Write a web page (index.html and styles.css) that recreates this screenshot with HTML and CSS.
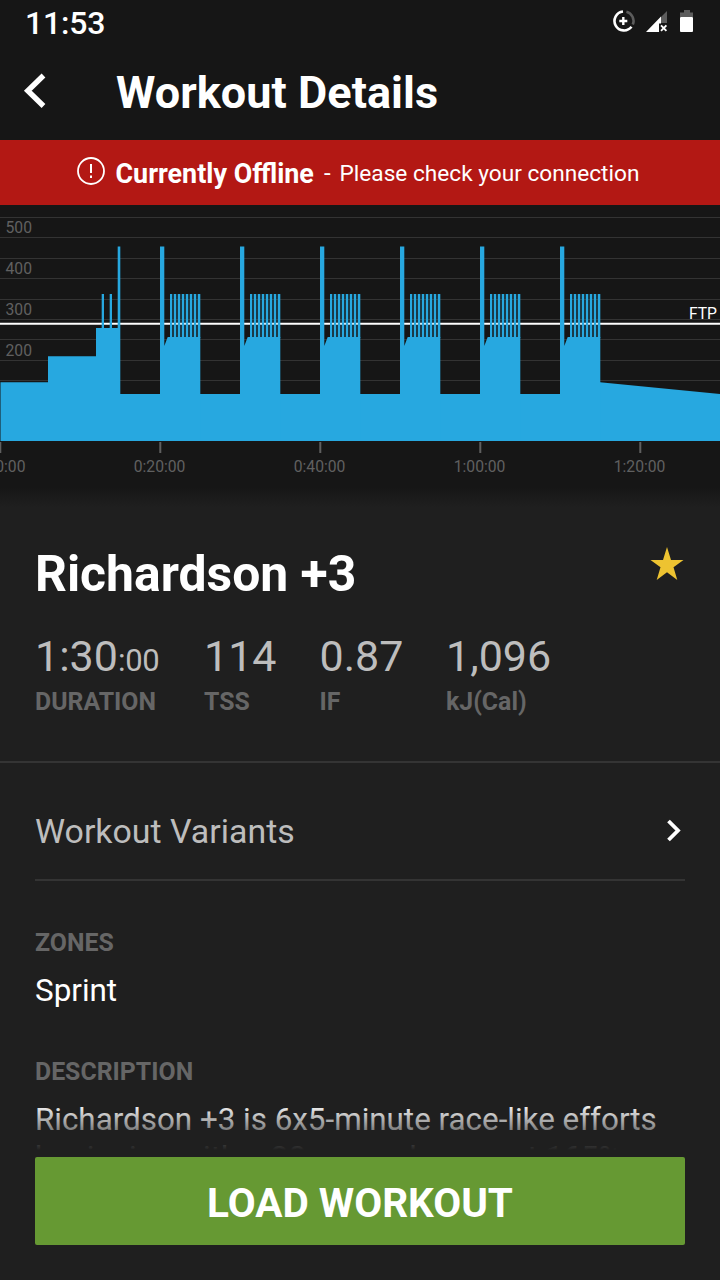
FILE: index.html
```
<!DOCTYPE html>
<html lang="en">
<head>
<meta charset="UTF-8">
<meta name="viewport" content="width=device-width, initial-scale=1.0">
<title>Workout Details</title>
<link rel="stylesheet" href="styles.css">
</head>
<body>

<div class="screen">
    <div class="status-bar">
        <span class="time">11:53</span>
        <svg class="status-icons" width="84" height="26" viewBox="0 0 84 26">
            <!-- data saver -->
            <path d="M12 3.5A9.5 9.5 0 1 0 20.5 18.8" fill="none" stroke="#fff" stroke-width="2.6"/>
            <path d="M15.4 3.8A9.5 9.5 0 0 1 21.8 16.6" fill="none" stroke="#5c5c5c" stroke-width="2.6"/>
            <path d="M12.3 9v8M8.3 13h8" stroke="#fff" stroke-width="2.4"/>
            <!-- signal -->
            <path d="M56 3v12h-7V10z" fill="#5c5c5c"/>
            <path d="M35 24L50 8.500V15.500h-2V24z" fill="#fff"/>
            <path d="M50 17.400l5.400 5.400M55.400 17.400L50 22.800" stroke="#fff" stroke-width="1.900"/>
            <!-- battery -->
            <path d="M69 9V4.500h4V2h6v2.500h3V9z" fill="#5c5c5c"/>
            <rect x="69" y="9" width="13" height="15" rx="1" fill="#fff"/>
        </svg>
    </div>

    <div class="header">
        <svg class="back" width="24" height="36" viewBox="0 0 24 36">
            <path d="M20.500 2.500L4.800 17.800L20.500 33" fill="none" stroke="#fff" stroke-width="5.400"/>
        </svg>
        <h1>Workout Details</h1>
    </div>

    <div class="banner">
        <svg class="alert" width="28" height="28" viewBox="0 0 28 28">
            <circle cx="14" cy="14" r="13" fill="none" stroke="#fff" stroke-width="1.800"/>
            <path d="M14 7v9M14 18.500v2.400" stroke="#fff" stroke-width="2"/>
        </svg>
        <b>Currently Offline</b>
        <span class="dash">-</span>
        <span class="message">Please check your connection</span>
    </div>

    <svg class="chart" width="720" height="282" viewBox="0 0 720 282">
        <defs>
            <!-- one effort: opening sprint, then eight short bursts -->
            <g id="effort">
                <rect x="10" y="89" width="30" height="44" opacity=".25"/>
                <path d="M0 237V41.500H4.300V141L7.700 132H40.300V237z"/>
                <path d="M10 89h2v44h-2zM14 89h2v44h-2zM18 89h2v44h-2zM22 89h2v44h-2zM26 89h2v44h-2zM30 89h2v44h-2zM34 89h2v44h-2zM38 89h2.300v44h-2.300z"/>
            </g>
        </defs>

        <path class="grid" d="M0 12.500H720M0 32.500H720M0 53.500H720M0 73.500H720M0 94.500H720M0 114.500H720M0 134.500H720M0 155.500H720M0 175.500H720"/>
        <path class="ftp-line" d="M0 118.700H720"/>
        <path class="ticks" d="M.3 237V248M160.300 237V248M320.300 237V248M480.300 237V248M640.300 237V248"/>

        <g class="power">
            <path d="M.5 236V177.300H48V151.300H96V123H101.700V89H104V123H109.700V89H112V123H117.700V41.500H120.300V189H600V177.300L720 189V236z"/>
            <use href="#effort" x="160"/>
            <use href="#effort" x="240"/>
            <use href="#effort" x="320"/>
            <use href="#effort" x="400"/>
            <use href="#effort" x="480"/>
            <use href="#effort" x="560"/>
        </g>
        <rect class="base" x="0" y="236" width="720" height="1"/>

        <g class="watts">
            <text x="5.500" y="28">500</text>
            <text x="5.500" y="69">400</text>
            <text x="5.500" y="110">300</text>
            <text x="5.500" y="151">200</text>
        </g>
        <text class="ftp" x="717" y="114">FTP</text>
        <g class="times">
            <text x="-.4" y="267">0:00:00</text>
            <text x="159.600" y="267">0:20:00</text>
            <text x="319.600" y="267">0:40:00</text>
            <text x="479.600" y="267">1:00:00</text>
            <text x="639.600" y="267">1:20:00</text>
        </g>
    </svg>

    <div class="details">
        <div class="summary">
            <div class="name-row">
                <h2>Richardson +3</h2>
                <svg class="star" width="34" height="34" viewBox="0 0 34 34">
                    <path d="M17 0l4 13H33.500L23.500 20.300L27.300 33L17 25.300L6.700 33L10.500 20.300L.5 13H13z" fill="#edc331"/>
                </svg>
            </div>
            <div class="stats">
                <div class="stat duration">
                    <div class="value">1:30<small>:00</small></div>
                    <div class="label">DURATION</div>
                </div>
                <div class="stat tss">
                    <div class="value">114</div>
                    <div class="label">TSS</div>
                </div>
                <div class="stat if">
                    <div class="value">0.87</div>
                    <div class="label">IF</div>
                </div>
                <div class="stat">
                    <div class="value">1,096</div>
                    <div class="label">kJ(Cal)</div>
                </div>
            </div>
        </div>

        <div class="variants">
            <span>Workout Variants</span>
            <svg width="16" height="24" viewBox="0 0 16 24">
                <path d="M2.500 2L12 11.500L2.500 21" fill="none" stroke="#fff" stroke-width="3.800"/>
            </svg>
        </div>

        <div class="label zones-label">ZONES</div>
        <div class="zone">Sprint</div>

        <div class="label description-label">DESCRIPTION</div>
        <p class="description">Richardson +3 is 6x5-minute race-like efforts beginning with a 30-second surge at 165%</p>
    </div>

    <div class="footer">
        <button type="button">LOAD WORKOUT</button>
    </div>
</div>

</body>
</html>
```
FILE: styles.css
```
body {
    font-family: Roboto, sans-serif;
    background-color: #1f1f1f;
    color: #fff;
    margin: 0;
}
svg {
    display: block;
    flex-shrink: 0;
}
h1, h2, p {
    margin: 0;
}
.screen {
    position: relative;
    width: 720px;
    height: 1280px;
    overflow: hidden;
}
.status-bar {
    display: flex;
    justify-content: space-between;
    align-items: center;
    height: 46px;
    padding: 0 25px;
    background-color: #161616;
}
.time {
    font-size: 32px;
    font-weight: 500;
    letter-spacing: -0.2px;
}
.status-icons {
    margin-bottom: 4px;
}
.header {
    display: flex;
    align-items: center;
    height: 94px;
    padding-left: 23px;
    background-color: #161616;
}
.back {
    margin-right: 69px;
    margin-bottom: 4px;
}
h1 {
    font-size: 45px;
    line-height: 94px;
    font-weight: 700;
    letter-spacing: 0.05px;
}
.banner {
    display: flex;
    align-items: center;
    height: 65px;
    padding-left: 76.500px;
    background-color: #b31814;
    white-space: nowrap;
}
.alert {
    margin-right: 11px;
    margin-bottom: 3px;
}
.banner b {
    font-size: 26.900px;
    line-height: 36px;
    margin-top: 2px;
}
.dash {
    font-size: 24px;
    margin: 0 9px 0 10px;
}
.message {
    font-size: 22.650px;
    margin-top: 1px;
}

/* power profile */
.chart {
    background-color: #161616;
    overflow: hidden;
}
.grid {
    stroke: #333;
    stroke-width: 1;
}
.ftp-line {
    stroke: #fff;
    stroke-width: 2;
}
.ticks {
    stroke: #5f5f5f;
    stroke-width: 2;
}
.power {
    fill: #27a8e0;
}
.base {
    fill: #161616;
}
.watts {
    fill: #606060;
    font-size: 15.700px;
}
.ftp {
    fill: #fff;
    font-size: 15.700px;
    text-anchor: end;
}
.times {
    fill: #606060;
    font-size: 15.700px;
    text-anchor: middle;
}

.details {
    height: 793px;
    background: linear-gradient(#161616, #1f1f1f 20px);
}
.summary {
    padding: 52px 35px 0;
    height: 222px;
    border-bottom: 2px solid #343434;
}
.name-row {
    display: flex;
    justify-content: space-between;
}
h2 {
    font-size: 49.850px;
    line-height: 70px;
    font-weight: 700;
}
.star {
    margin: 8px 1.500px 0 0;
}
.stats {
    display: flex;
    margin-top: 18px;
}
.value {
    height: 60px;
    font-size: 43px;
    line-height: 59px;
    color: #bdbdbd;
}
.value small {
    font-size: 31px;
    letter-spacing: -0.3px;
}
.duration {
    width: 169px;
}
.tss {
    width: 115.500px;
}
.if {
    width: 126.500px;
}
.label {
    font-size: 24.850px;
    line-height: 30px;
    font-weight: 700;
    color: #666;
}
.variants {
    display: flex;
    justify-content: space-between;
    align-items: center;
    height: 96px;
    margin: 20px 35px 0;
    padding-right: 3px;
    border-bottom: 2px solid #343434;
    font-size: 33.900px;
    color: #bdbdbd;
}
.variants svg {
    margin-bottom: 1px;
}
.zones-label {
    margin: 47px 35px 0;
}
.zone {
    margin: 13px 35px 0;
    font-size: 31.400px;
    line-height: 40px;
}
.description-label {
    margin: 46px 35px 0;
}
.description {
    margin: 14px 35px 0;
    font-size: 31.360px;
    line-height: 38px;
}

/* sits over the scrolled text and fades it out */
.footer {
    position: absolute;
    left: 0;
    right: 0;
    bottom: 0;
    padding: 54px 35px 35px;
    background: linear-gradient(rgba(31, 31, 31, 0), #1f1f1f 47px);
}
button {
    display: block;
    width: 100%;
    height: 88px;
    padding: 4px 0 0;
    border: none;
    border-radius: 2px;
    background-color: #693;
    color: #fff;
    font-family: inherit;
    font-size: 40.500px;
    font-weight: 700;
}
```
